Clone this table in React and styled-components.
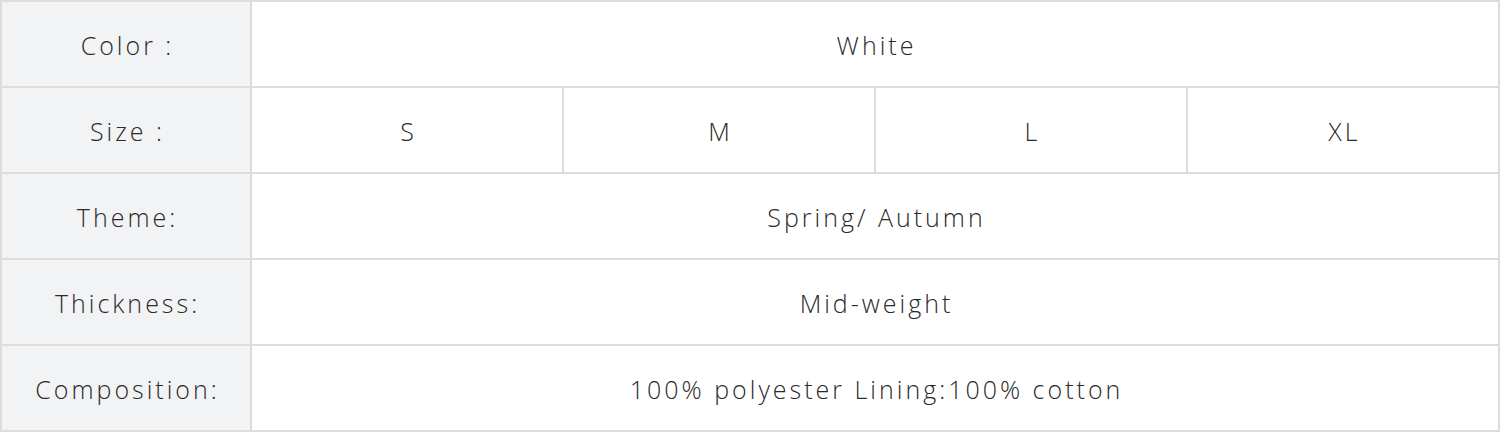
import React from "react";
import styled, { createGlobalStyle } from "styled-components";

const GlobalStyle = createGlobalStyle`
    html, body {
        margin: 0;
        padding: 0;
        background: #ffffff;
    }
`

const rows = [
    { label: "Color :", values: ["White"] },
    { label: "Size :", values: ["S", "M", "L", "XL"] },
    { label: "Theme:", values: ["Spring/ Autumn"] },
    { label: "Thickness:", values: ["Mid-weight"] },
    { label: "Composition:", values: ["100% polyester Lining:100% cotton"] },
];

export default function App() {
    return <>
        <GlobalStyle/>
        <Table>
            {rows.map(row => (
                <React.Fragment key={row.label}>
                    <Label>{row.label}</Label>
                    {row.values.map(v => (
                        <Value key={v} span={4 / row.values.length}>{v}</Value>
                    ))}
                </React.Fragment>
            ))}
        </Table>
    </>
}

const Table = styled.div`
    display: grid;
    grid-template-columns: 248px repeat(4, 1fr);
    grid-auto-rows: 84px;
    gap: 2px;
    padding: 2px;
    width: 1500px;
    box-sizing: border-box;
    background: #dcdcdc;
    font-family: "Open Sans", "Noto Sans", sans-serif;
    font-size: 25px;
    font-weight: 300;
    letter-spacing: 3px;
    color: #2a2a2a;
`

const Cell = styled.div`
    display: flex;
    align-items: center;
    justify-content: center;
    white-space: nowrap;
    padding-left: 3px;
    padding-top: 1px;
`

const Label = styled(Cell)`
    background: #f2f3f5;
`

const Value = styled(Cell)`
    background: #ffffff;
    grid-column: span ${props => props.span};
`
